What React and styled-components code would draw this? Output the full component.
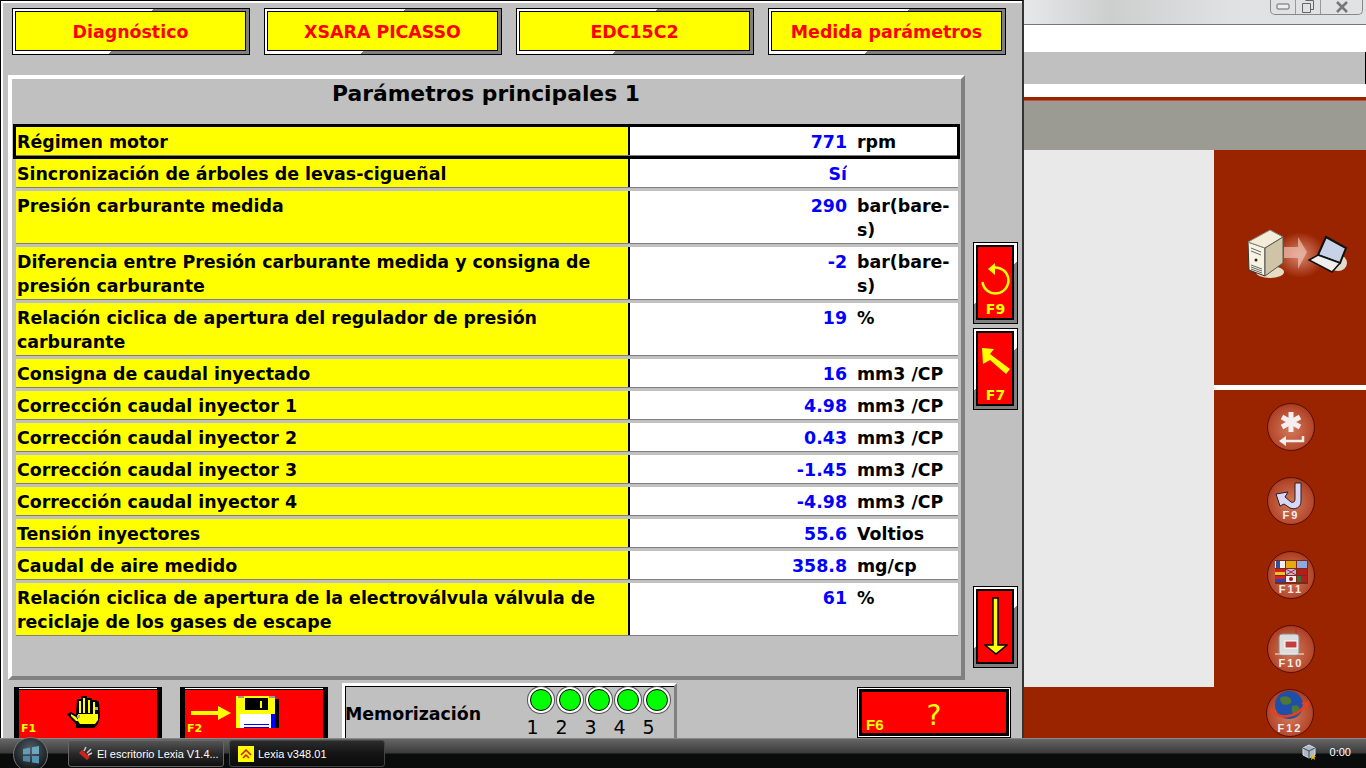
import React from 'react';
import styled, {createGlobalStyle} from "styled-components";

const GlobalStyle = createGlobalStyle`
    html, body {
        margin: 0;
        padding: 0;
        background: #000;
    }
    * {
        box-sizing: border-box;
    }
`

const rows = [
    {label: "Régimen motor", value: "771", unit: "rpm", selected: true},
    {label: "Sincronización de árboles de levas-cigueñal", value: "Sí", unit: ""},
    {label: "Presión carburante medida", value: "290", unit: "bar(bare-s)", tall: true},
    {label: "Diferencia entre Presión carburante medida y consigna de presión carburante", value: "-2", unit: "bar(bare-s)", tall: true},
    {label: "Relación ciclica de apertura del regulador de presión carburante", value: "19", unit: "%", tall: true},
    {label: "Consigna de caudal inyectado", value: "16", unit: "mm3 /CP"},
    {label: "Corrección caudal inyector 1", value: "4.98", unit: "mm3 /CP"},
    {label: "Corrección caudal inyector 2", value: "0.43", unit: "mm3 /CP"},
    {label: "Corrección caudal inyector 3", value: "-1.45", unit: "mm3 /CP"},
    {label: "Corrección caudal inyector 4", value: "-4.98", unit: "mm3 /CP"},
    {label: "Tensión inyectores", value: "55.6", unit: "Voltios"},
    {label: "Caudal de aire medido", value: "358.8", unit: "mg/cp"},
    {label: "Relación ciclica de apertura de la electroválvula válvula de reciclaje de los gases de escape", value: "61", unit: "%", tall: true},
];

const crumbs = ["Diagnóstico", "XSARA PICASSO", "EDC15C2", "Medida parámetros"];

const FONT = `"DejaVu Sans", Verdana, sans-serif`;

const RoundIcon = ({label, children, small}) => (
    <Round $small={small}>
        <svg width="48" height="48" viewBox="0 0 48 48">{children}</svg>
        {label && <RoundLabel $small={small}>{label}</RoundLabel>}
    </Round>
);

const App = () => {
    return (
        <Screen>
            <GlobalStyle />
            <Desktop>
                <Dialog>
                    <CrumbBar>
                        {crumbs.map((crumb) => <Crumb key={crumb}><span>{crumb}</span></Crumb>)}
                    </CrumbBar>
                    <MiddleRow>
                        <Panel>
                            <PanelTitle>Parámetros principales 1</PanelTitle>
                            <Table>
                                {rows.map((row, i) => (
                                    <Row key={i} $tall={row.tall} $selected={row.selected}>
                                        <Label>{row.label}</Label>
                                        <Value>{row.value}</Value>
                                        <Unit>{row.unit}</Unit>
                                    </Row>
                                ))}
                            </Table>
                        </Panel>
                        <SideColumn>
                            <SideButton>
                                <svg width="30" height="34" viewBox="0 0 30 34">
                                    <path d="M13 5.500 A13 13 0 1 1 1.500 20" fill="none" stroke="#ff0" strokeWidth="2.500" />
                                    <path d="M7 7 L14 1 L14 13 Z" fill="#ff0" />
                                </svg>
                                <SideKey>F9</SideKey>
                            </SideButton>
                            <SideButton>
                                <svg width="30" height="34" viewBox="0 0 30 34">
                                    <path d="M1 0 L13 1 L9 6 L29 21 L25 26 L9 12 L2 16 Z" fill="#ff0" />
                                </svg>
                                <SideKey>F7</SideKey>
                            </SideButton>
                            <SideSpacer />
                            <SideButton $top={10}>
                                <svg width="24" height="58" viewBox="0 0 24 58">
                                    <path d="M9 1 H14 V48 H23 L12 57 L1 48 H9 Z" fill="#ff0" stroke="#000" strokeWidth="1.500" />
                                </svg>
                            </SideButton>
                        </SideColumn>
                    </MiddleRow>
                    <BottomRow>
                        <ActionButton $nudge={9}>
                            <ActionKey>F1</ActionKey>
                            <svg width="34" height="33" viewBox="0 0 34 33">
                                <path d="M10 3 L14 3 L14 0 L20 0 L20 2 L25 2 L25 4 L29 4 L32 6 L33 20 L31 28 L27 32 L9 32 L9 28 L5 24 L0 18 L4 16 L9 19 Z" fill="#000" />
                                <path d="M12 5 H14 V17 H12 Z M16 2 H18 V17 H16 Z M21 4 H23 V17 H21 Z M26 6 H28 V18 H26 Z" fill="#ff0" />
                                <path d="M11 18 H31 V24 L28 28 H13 L11 25 Z" fill="#ff0" />
                                <path d="M4 18 L9 21 L12 25 L9 25 L4 20 Z" fill="#ff0" />
                                <path d="M10 19 H13 V22 H10 Z M28 11 H31 V14 H28 Z" fill="#aaa" />
                            </svg>
                        </ActionButton>
                        <ActionButton $nudge={38}>
                            <ActionKey>F2</ActionKey>
                            <svg width="88" height="32" viewBox="0 0 88 32">
                                <path d="M0 15 H27 V10 L40 17 L27 24 V19 H0 Z" fill="#ff0" />
                                <path d="M45 0 H84 V32 H45 Z" fill="#ff0" />
                                <path d="M84 3 H88 V32 H84 Z" fill="#000" />
                                <path d="M47 0 H53 V2 H47 Z M78 0 H84 V2 H78 Z" fill="#999" />
                                <path d="M54 2 H77 V14 H54 Z" fill="#000" />
                                <path d="M69 5 H71 V12 H69 Z" fill="#ff0" />
                                <path d="M49 18 H84 V32 H49 Z" fill="#00f" />
                                <path d="M49 18 H80 V32 H49 Z" fill="#fff" />
                                <path d="M53 28 H78 V29 H53 Z M53 31 H78 V32 H53 Z" fill="#00f" />
                            </svg>
                        </ActionButton>
                        <MemoBox>
                            <MemoLabel>Memorización</MemoLabel>
                            <Lights>
                                {[1, 2, 3, 4, 5].map((n) => (
                                    <LightCell key={n}>
                                        <Light />
                                        <span>{n}</span>
                                    </LightCell>
                                ))}
                            </Lights>
                        </MemoBox>
                        <HelpButton>
                            <ActionKey>F6</ActionKey>
                            <span>?</span>
                        </HelpButton>
                    </BottomRow>
                </Dialog>
                <Backdrop>
                    <TitleBar>
                        <WindowControls>
                            <WindowControl $width={25}>
                                <svg width="14" height="8" viewBox="0 0 14 8"><rect x="1" y="1" width="12" height="5" rx="1" fill="#eee" stroke="#666" /></svg>
                            </WindowControl>
                            <WindowControl $width={25}>
                                <svg width="14" height="14" viewBox="0 0 14 14"><path d="M4.500 .500 H12.500 V9.500 H9.500 M1.500 3.500 H9.500 V12.500 H1.500 Z" fill="none" stroke="#666" /></svg>
                            </WindowControl>
                            <WindowControl $width={41}>
                                <svg width="14" height="12" viewBox="0 0 14 12"><path d="M2 1 L12 11 M12 1 L2 11" stroke="#777" strokeWidth="2.500" /></svg>
                            </WindowControl>
                        </WindowControls>
                    </TitleBar>
                    <AddressBar />
                    <GreyBand />
                    <WhiteBand />
                    <RedLine />
                    <HeaderBand />
                    <Workspace>
                        <WorkArea />
                        <Rail>
                            <RailTop>
                                <svg width="102" height="50" viewBox="0 0 102 50">
                                    <defs>
                                        <radialGradient id="glow">
                                            <stop offset="0" stopColor="#d88a74" />
                                            <stop offset="1" stopColor="#9a2300" />
                                        </radialGradient>
                                    </defs>
                                    <rect x="26" y="3" width="52" height="46" fill="url(#glow)" />
                                    <ellipse cx="22" cy="43" rx="14" ry="6" fill="#e6dcc4" />
                                    <ellipse cx="90" cy="34" rx="9" ry="8" fill="#e4dccb" />
                                    <path d="M0 13 L17 19 L17 47 L1 41 Z" fill="#f7f3e2" stroke="#333" />
                                    <path d="M0 13 L22 1 L35 8 L17 19 Z" fill="#f2ecd8" stroke="#888" />
                                    <path d="M17 19 L35 8 L35 34 L17 47 Z" fill="#cfc4a6" stroke="#555" />
                                    <path d="M3 36 L14 40 M3 38 L14 42 M3 40 L14 44 M3 19 L13 23 M3 22 L13 26" stroke="#666" />
                                    <circle cx="8" cy="31" r="1.500" fill="#222" />
                                    <path d="M36 18 H50 V8 L59 23 L50 40 V29 H36 Z" fill="#f0c0b0" opacity=".7" />
                                    <path d="M78 8 L98 19 L92 34 L70 26 Z" fill="#c7d2e6" stroke="#111" strokeWidth="2" />
                                    <path d="M70 26 L92 34 L84 43 L61 31 Z" fill="#eee" stroke="#111" strokeWidth="1.500" />
                                </svg>
                            </RailTop>
                            <RailBottom>
                                <RoundIcon>
                                    <path d="M24 9 V29 M15 14 L33 24 M33 14 L15 24" stroke="#f4eeee" strokeWidth="5" />
                                    <path d="M36 33 V38 H16" fill="none" stroke="#f4eeee" strokeWidth="2.500" />
                                    <path d="M19 33 L12 38 L19 43 Z" fill="#f4eeee" />
                                </RoundIcon>
                                <RoundIcon label="F9">
                                    <path d="M28 6 H34 V24 C34 31 28 33 23 31 L17 27 L13 29 L9 17 L21 15 L18 20 L24 25 C26 26 28 25 28 22 Z" fill="#d9d7f5" stroke="#222" />
                                </RoundIcon>
                                <RoundIcon label="F11">
                                    <rect x="8" y="9" width="33" height="24" fill="#7a2a18" />
                                    <rect x="8" y="10" width="10" height="7" fill="#eee" />
                                    <rect x="9" y="10" width="4" height="7" fill="#3050a0" />
                                    <rect x="19" y="10" width="10" height="7" fill="#e8a810" />
                                    <rect x="30" y="10" width="10" height="7" fill="#8ea8e0" />
                                    <rect x="8" y="18" width="10" height="3" fill="#d02020" />
                                    <rect x="8" y="21" width="10" height="3" fill="#f0c020" />
                                    <rect x="19" y="18" width="10" height="6" fill="#b8b8e0" />
                                    <path d="M19 18 L29 24 M29 18 L19 24" stroke="#c02020" />
                                    <rect x="30" y="18" width="10" height="6" fill="#b51c1c" />
                                    <rect x="8" y="25" width="10" height="3" fill="#e02020" />
                                    <rect x="8" y="28" width="10" height="3" fill="#2848b8" />
                                    <rect x="19" y="25" width="10" height="6" fill="#eee" />
                                    <rect x="30" y="25" width="10" height="6" fill="#387030" />
                                    <rect x="34" y="25" width="6" height="6" fill="#b02020" />
                                    <circle cx="24" cy="28" r="2" fill="#b01010" />
                                </RoundIcon>
                                <RoundIcon label="F10">
                                    <path d="M29 3 V15" stroke="#c03030" strokeWidth="2" />
                                    <rect x="12" y="9" width="20" height="21" rx="3" fill="#dcdcdc" stroke="#888" />
                                    <rect x="18" y="16" width="12" height="7" fill="#c04040" stroke="#fff" />
                                    <path d="M8 29 H37" stroke="#eee" />
                                </RoundIcon>
                                <RoundIcon label="F12" small>
                                    <circle cx="23" cy="16" r="14" fill="#1f4fa8" />
                                    <path d="M14 9 C20 5 27 9 25 14 C21 17 14 17 14 9 Z M26 17 C34 14 36 22 30 26 C26 26 25 22 26 17 Z" fill="#4e7838" />
                                    <path d="M4 20 C12 31 30 30 40 15" fill="none" stroke="#e8401c" strokeWidth="2.500" />
                                    <path d="M35 14 L43 12 L42 20 Z" fill="#e8401c" />
                                </RoundIcon>
                            </RailBottom>
                        </Rail>
                    </Workspace>
                </Backdrop>
            </Desktop>
            <Taskbar>
                <StartOrb>
                    <svg width="22" height="20" viewBox="0 0 20 20">
                        <path d="M2 4 L9 2.500 V9 L2 9.500 Z" fill="#5f9db8" />
                        <path d="M11 2.200 L18 1 V9 L11 9 Z" fill="#6aa8c0" />
                        <path d="M2 11 L9 11 V17 L2 16 Z" fill="#4b88a8" />
                        <path d="M11 11 L18 11 V18.500 L11 17.500 Z" fill="#5494b0" />
                    </svg>
                </StartOrb>
                <TaskButton>
                    <svg width="16" height="16" viewBox="0 0 16 16">
                        <path d="M2 7 L10 14 L13 11 L5 4 Z" fill="#d02020" />
                        <path d="M7 5 L9 1 M10 7 L14 3 M11 9 L15 7" stroke="#ccc" strokeWidth="1.500" />
                    </svg>
                    <span>El escritorio Lexia V1.4...</span>
                </TaskButton>
                <TaskButton $active>
                    <AppGlyph>
                        <svg width="16" height="16" viewBox="0 0 16 16">
                            <path d="M3 9 L8 4 L13 9 M5 12 L8 9 L11 12" fill="none" stroke="#e01010" strokeWidth="1.500" />
                        </svg>
                    </AppGlyph>
                    <span>Lexia v348.01</span>
                </TaskButton>
                <Tray>
                    <svg width="14" height="16" viewBox="0 0 14 16">
                        <path d="M7 1 L13 4 V11 L7 14 L1 11 V4 Z" fill="#aeb8c4" stroke="#dfe4ea" />
                        <path d="M1 4 L7 7 L13 4 M7 7 V14" fill="none" stroke="#3c4a5c" />
                        <path d="M11 10 L12 12 L14 12 L12.500 13.500 L13 16 L11 14.500 L9 16 L9.500 13.500 L8 12 L10 12 Z" fill="#f0b820" />
                    </svg>
                    <span>0:00</span>
                </Tray>
            </Taskbar>
        </Screen>
    )
}

const Screen = styled.div`
    width: 1366px;
    height: 768px;
    display: flex;
    flex-direction: column;
    overflow: hidden;
    font-family: ${FONT};
`

const Desktop = styled.div`
    height: 738px;
    display: flex;
    overflow: hidden;
`

const Dialog = styled.div`
    width: 1024px;
    height: 738px;
    flex: none;
    background: #c0c0c0;
    border-top: 1px solid #000;
    border-left: 1px solid #000;
    border-right: 2px solid #333;
    box-shadow: inset 2px 2px 0 #fff;
    padding: 7px 0 0 7px;
    overflow: hidden;
`

const CrumbBar = styled.div`
    display: flex;
    gap: 14px;
    padding-left: 4px;
`

const Crumb = styled.div`
    width: 238px;
    height: 47px;
    padding: 2px 3px 3px 2px;
    border: 1px solid #000;
    background: linear-gradient(135deg, #fff 50%, #808080 50%);

    span {
        display: flex;
        align-items: center;
        justify-content: center;
        width: 100%;
        height: 100%;
        padding-top: 2px;
        background: #ff0;
        border: 1px solid #000;
        color: #f00;
        font-size: 17.4px;
        font-weight: 700;
    }
`

const MiddleRow = styled.div`
    display: flex;
    margin-top: 20px;
    height: 605px;
`

const Panel = styled.div`
    width: 957px;
    height: 605px;
    flex: none;
    border-style: solid;
    border-width: 4px;
    border-color: #fff #808080 #808080 #fff;
    padding-left: 4px;
`

const PanelTitle = styled.div`
    height: 45px;
    padding-top: 1px;
    line-height: 28px;
    text-align: center;
    font-size: 21.8px;
    font-weight: 700;
    color: #000;
    padding-right: 5px;
`

const Table = styled.div`
    display: flex;
    flex-direction: column;
`

const Row = styled.div`
    display: grid;
    grid-template-columns: 612px 2px 217px 10px 1fr;
    width: 942px;
    height: ${props => props.$tall ? 56 : 32}px;
    padding-bottom: 4px;
    font-size: 17.4px;
    font-weight: 700;
    line-height: 24px;

    ${props => props.$selected && `
        width: 947px;
        height: 35px;
        margin-left: -3px;
        padding-bottom: 1px;
        border: 3px solid #000;
    `}
`

const Label = styled.div`
    grid-column: 1 / 3;
    background: #ff0;
    color: #000;
    padding: 3px 0 0 1px;
    border-right: 2px solid #000;
    box-shadow: 0 1px 0 #808080;
`

const Value = styled.div`
    grid-column: 3;
    background: #fff;
    color: #00f;
    padding-top: 3px;
    text-align: right;
    box-shadow: 0 1px 0 #808080;
`

const Unit = styled.div`
    grid-column: 4 / 6;
    background: #fff;
    color: #000;
    padding: 3px 0 0 10px;
    box-shadow: 0 1px 0 #808080;
`

const SideColumn = styled.div`
    display: flex;
    flex-direction: column;
    gap: 4px;
    padding: 167px 0 0 8px;
    height: 605px;
`

const SideSpacer = styled.div`
    height: 168px;
`

const SideButton = styled.div`
    width: 45px;
    height: 82px;
    flex: none;
    padding-top: ${props => props.$top ?? 19}px;
    border: 1px solid #000;
    background: linear-gradient(135deg, #fff 50%, #808080 50%);
    display: flex;
    justify-content: center;
    align-items: flex-start;
    position: relative;

    &::before {
        content: "";
        position: absolute;
        inset: 2px 3px 3px 2px;
        background: #f00;
        border: 2px solid #000;
    }

    svg {
        position: relative;
    }
`

const SideKey = styled.span`
    position: absolute;
    left: 0;
    right: 0;
    bottom: 7px;
    text-align: center;
    color: #ff0;
    font-weight: 700;
    font-size: 14px;
    line-height: 14px;
`

const BottomRow = styled.div`
    display: flex;
    margin-top: 3px;
    padding-left: 6px;
    align-items: flex-start;
    height: 70px;
`

const ActionButton = styled.div`
    width: 148px;
    height: 62px;
    margin: 4px 18px 0 0;
    padding: 6px ${props => props.$nudge}px 0 0;
    background: #f00;
    border-style: solid;
    border-width: 3px 5px 0 5px;
    border-color: #000;
    position: relative;
    display: flex;
    justify-content: center;

    &::before {
        content: "";
        position: absolute;
        inset: -2px 0 auto 0;
        height: 1px;
        background: #fff;
    }
`

const ActionKey = styled.span`
    position: absolute;
    left: 2px;
    top: 33px;
    color: #ff0;
    font-weight: 700;
    font-size: 11px;
    line-height: 12px;
`

const MemoBox = styled.div`
    width: 335px;
    height: 62px;
    margin-left: -4px;
    border: 3px solid;
    border-color: #fff #808080 #808080 #fff;
    display: flex;
    justify-content: space-between;
    box-shadow: inset 1px 1px 0 #000;
`

const MemoLabel = styled.div`
    font-size: 17.4px;
    font-weight: 700;
    line-height: 56px;
    color: #000;
`

const Lights = styled.div`
    display: flex;
    gap: 2px;
    padding: 2px 4px 0 0;
`

const LightCell = styled.div`
    width: 27px;
    display: flex;
    flex-direction: column;
    align-items: center;
    font-size: 19px;
    line-height: 22px;
    color: #000;

    span {
        margin: 5px 16px 0 0;
    }
`

const Light = styled.div`
    width: 22px;
    height: 22px;
    flex: none;
    border-radius: 50%;
    background: #0f0;
    border: 1px solid #000;
    box-shadow: 0 0 0 2px #fff, 0 0 0 3px #555;
    margin-top: 1px;
`

const HelpButton = styled.div`
    width: 154px;
    height: 51px;
    margin-left: 180px;
    margin-top: 4px;
    background: #f00;
    border: 1px solid #000;
    box-shadow: inset 0 0 0 1px #fff, inset 0 0 0 4px #000;
    position: relative;
    text-align: center;
    color: #ff0;
    font-size: 28px;
    line-height: 56px;

    ${ActionKey} {
        left: 8px;
        top: 31px;
        font-family: "Liberation Sans", sans-serif;
        font-size: 15px;
    }
`

const Backdrop = styled.div`
    flex: 1;
    display: flex;
    flex-direction: column;
    min-width: 0;
`

const TitleBar = styled.div`
    height: 25px;
    flex: none;
    background: linear-gradient(90deg, #e6e8e9, #cdcfcf 25%, #dfe1e2 60%, #e0e2e3);
    border-bottom: 1px solid #777;
    display: flex;
    justify-content: flex-end;
    padding-right: 3px;
`

const WindowControls = styled.div`
    height: 15px;
    display: flex;
    border: 1px solid #888;
    border-top: none;
    border-radius: 0 0 5px 5px;
`

const WindowControl = styled.div`
    width: ${props => props.$width}px;
    display: flex;
    align-items: center;
    justify-content: center;
    border-right: 1px solid #999;
    overflow: hidden;

    &:last-child {
        border-right: none;
    }
`

const AddressBar = styled.div`
    height: 27px;
    flex: none;
    background: #fff;
`

const GreyBand = styled.div`
    height: 32px;
    flex: none;
    background: #c0c0c0;
    margin-right: 1px;
`

const WhiteBand = styled.div`
    height: 13px;
    flex: none;
    background: #fff;
`

const RedLine = styled.div`
    height: 4px;
    flex: none;
    background: #9a2300;
    border-bottom: 1px solid #c25038;
`

const HeaderBand = styled.div`
    height: 49px;
    flex: none;
    background: #9b9b94;
`

const Workspace = styled.div`
    flex: 1;
    display: grid;
    grid-template-columns: 190px 152px;
    background: #9a2300;
    align-items: start;
`

const WorkArea = styled.div`
    height: 537px;
    background: #e9e9e9;
`

const Rail = styled.div`
    display: flex;
    flex-direction: column;
    height: 588px;
`

const RailTop = styled.div`
    height: 235px;
    padding: 79px 0 0 34px;
`

const RailBottom = styled.div`
    border-top: 5px solid #fff;
    flex: 1;
    display: flex;
    flex-direction: column;
    align-items: center;
    padding: 13px 0 0 2px;
    gap: 26px;
`

const Round = styled.div`
    width: 48px;
    height: 48px;
    flex: none;
    border-radius: 50%;
    border: 1.5px solid #5a0d00;
    background: radial-gradient(circle at 50% 55%, #d47a5c, #b54a2e 60%, #8c2408);
    position: relative;
    margin-top: ${props => props.$small ? -10 : 0}px;
    margin-left: ${props => props.$small ? -2 : 0}px;

    svg {
        position: absolute;
        left: -1.500px;
        top: -1.500px;
    }
`

const RoundLabel = styled.span`
    position: absolute;
    left: 0;
    right: 0;
    bottom: ${props => props.$small ? 2 : 3}px;
    text-align: center;
    color: #f4eeee;
    font-family: "Liberation Sans", sans-serif;
    font-weight: 700;
    font-size: 11px;
    letter-spacing: 2px;
    line-height: 11px;
`

const Taskbar = styled.div`
    height: 30px;
    flex: none;
    background: linear-gradient(#666 0, #3a3a3a 14px, #0a0c0c 15px, #0a0c0c 100%);
    border-top: 1px solid #888;
    display: flex;
    align-items: center;
    position: relative;
    padding-left: 68px;
    gap: 5px;
`

const StartOrb = styled.div`
    position: absolute;
    left: 13px;
    top: -2px;
    width: 35px;
    height: 35px;
    border-radius: 50%;
    background: radial-gradient(circle at 50% 35%, #55606a, #14181c 75%);
    border: 1px solid #777;
    display: flex;
    align-items: center;
    justify-content: center;
`

const TaskButton = styled.div`
    width: 156px;
    height: 27px;
    display: flex;
    align-items: center;
    gap: 4px;
    padding-left: 8px;
    border: 1px solid ${props => props.$active ? "#444" : "#666"};
    border-radius: 3px;
    background: ${props => props.$active
        ? "linear-gradient(#2c2c2c, #141414 50%, #0c0c0c)"
        : "linear-gradient(#555, #2a2a2a 50%, #101010)"};
    color: #fff;
    font-family: "Liberation Sans", sans-serif;
    font-size: 11px;
    white-space: nowrap;
`

const AppGlyph = styled.div`
    width: 16px;
    height: 16px;
    background: #ff0;
`

const Tray = styled.div`
    position: absolute;
    right: 15px;
    top: 5px;
    display: flex;
    align-items: center;
    gap: 14px;
    color: #fff;
    font-family: "Liberation Sans", sans-serif;
    font-size: 11px;
`

export default App;
